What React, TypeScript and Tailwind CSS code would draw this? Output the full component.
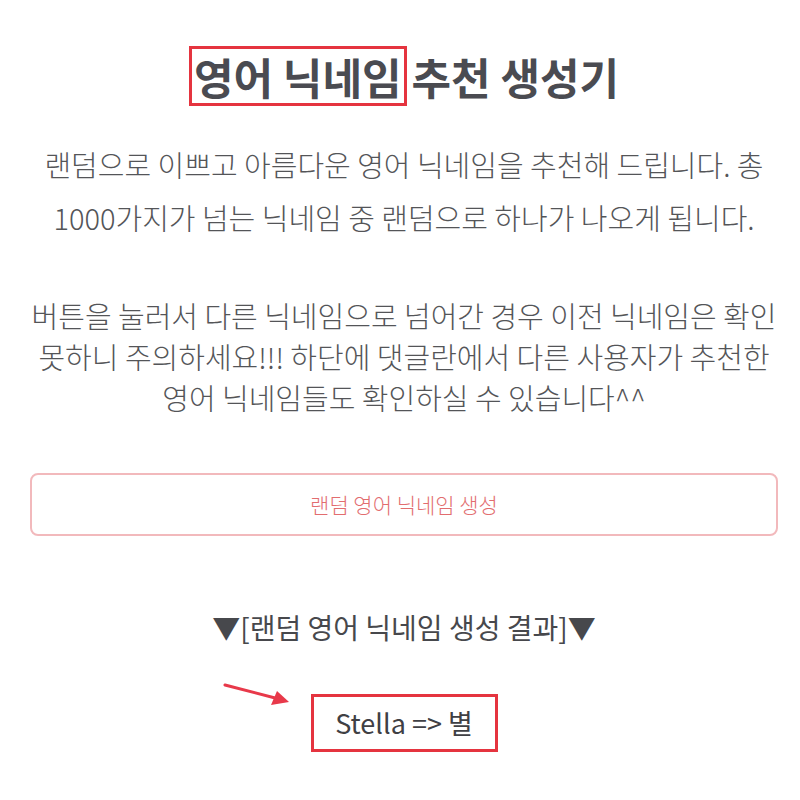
import React from 'react';

const font = { fontFamily: '"Noto Sans CJK KR", "Noto Sans", sans-serif' };

function Arrow() {
  return (
    <svg
      className="absolute left-[-90px] top-[-13px]"
      width="80"
      height="30"
      viewBox="0 0 80 30"
    >
      <line x1="4" y1="4" x2="58" y2="18" stroke="#e8394a" strokeWidth="3" strokeLinecap="round" />
      <polygon points="68,21 50,24 56,10" fill="#e8394a" />
    </svg>
  );
}

export default function App() {
  return (
    <div className="w-[800px] h-[800px] bg-white pl-[30px] pr-[22px] overflow-hidden" style={font}>
      <h1 className="pt-[46px] text-center text-[43px] leading-[60px] font-bold text-[#4a4b51]">
        <span className="inline-block border-[3px] border-[#e5343f] px-[2px] mr-[5px] leading-[54px]">영어 닉네임</span>
        추천 생성기
      </h1>

      <p className="mt-[32px] text-center text-[29px] leading-[53px] font-light text-[#545558] whitespace-nowrap">
        랜덤으로 이쁘고 아름다운 영어 닉네임을 추천해 드립니다. 총
        <br />
        1000가지가 넘는 닉네임 중 랜덤으로 하나가 나오게 됩니다.
      </p>

      <p className="mt-[51px] text-center text-[29px] leading-[41px] font-light text-[#545558] whitespace-nowrap">
        버튼을 눌러서 다른 닉네임으로 넘어간 경우 이전 닉네임은 확인
        <br />
        못하니 주의하세요!!! 하단에 댓글란에서 다른 사용자가 추천한
        <br />
        영어 닉네임들도 확인하실 수 있습니다^^
      </p>

      <button
        type="button"
        className="mt-[55px] w-full h-[63px] rounded-[8px] border-2 border-[#f2b9bc] bg-white text-[21px] font-light text-[#e26d6f]"
      >
        랜덤 영어 닉네임 생성
      </button>

      <div className="mt-[71px] text-center text-[28px] leading-[40px] text-[#47484c]">
        ▼[랜덤 영어 닉네임 생성 결과]▼
      </div>

      <div className="mt-[47px] flex justify-center">
        <div className="relative">
          <Arrow />
          <div className="w-[187px] h-[58px] border-[3px] border-[#e5343f] flex items-center justify-center text-[27px] text-[#3f4044]">
            Stella =&gt; 별
          </div>
        </div>
      </div>
    </div>
  );
}
